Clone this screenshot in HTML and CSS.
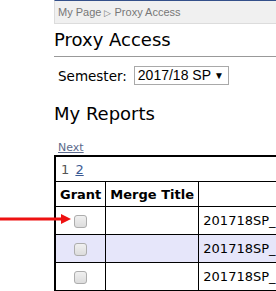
FILE: index.html
```html
<!DOCTYPE html>
<html>
<head>
  <link rel="stylesheet" href="styles.css">
</head>
<body>
  <div class="page">
    <div class="breadcrumb">My Page <span class="sep">&#9655;</span> Proxy Access</div>
    <h1 class="title">Proxy Access</h1>
    <div class="semester">
      <label for="sem">Semester:</label>
      <div class="select" id="sem">2017/18 SP<span class="caret">&#9660;</span></div>
    </div>
    <h2 class="subtitle">My Reports</h2>
    <a class="next" href="#">Next</a>
    <table class="reports">
      <tr class="pager">
        <td colspan="3">1 <a href="#">2</a></td>
      </tr>
      <tr>
        <th class="col-grant">Grant</th>
        <th class="col-merge">Merge Title</th>
        <th></th>
      </tr>
      <tr>
        <td class="col-grant"><span class="check"></span></td>
        <td></td>
        <td>201718SP_</td>
      </tr>
      <tr class="alt">
        <td class="col-grant"><span class="check"></span></td>
        <td></td>
        <td>201718SP_</td>
      </tr>
      <tr>
        <td class="col-grant"><span class="check"></span></td>
        <td></td>
        <td>201718SP_</td>
      </tr>
    </table>
  </div>
  <svg class="arrow" width="72" height="12" viewBox="0 0 72 12">
    <line x1="0" y1="6" x2="62" y2="6" stroke="#ee1111" stroke-width="3"/>
    <polygon points="61,1 71,6 61,11" fill="#ee1111"/>
  </svg>
</body>
</html>
```

FILE: styles.css
```css
body {
  margin: 0;
  background: #fff;
  font-family: "DejaVu Sans", Verdana, sans-serif;
  color: #000;
  position: relative;
  overflow: hidden;
}

.page {
  margin-left: 54px;
  width: 222px;
  overflow: hidden;
}

.breadcrumb {
  border-top: 1px solid #34508a;
  background: #f0f0f0;
  border-bottom: 1px solid #dcdcdc;
  border-left: 1px solid #dcdcdc;
  height: 22px;
  line-height: 22px;
  padding-left: 3px;
  font-family: "Liberation Sans", Arial, sans-serif;
  font-size: 11px;
  color: #777;
}

.breadcrumb .sep {
  font-size: 9px;
}

.title {
  font-size: 18px;
  font-weight: normal;
  margin: 0;
  padding: 5px 0 6px;
  border-bottom: 1px solid #999;
}

.semester {
  display: flex;
  align-items: center;
  gap: 7px;
  padding: 9px 0 0 4px;
  font-size: 13.5px;
}

.select {
  display: flex;
  align-items: center;
  width: 86px;
  border: 1px solid #a9a9a9;
  height: 17px;
  line-height: 17px;
  padding: 0 4px 0 3px;
  font-family: "Liberation Sans", Arial, sans-serif;
  font-size: 14px;
  color: #000;
}

.select .caret {
  font-size: 10px;
  margin-left: auto;
}

.subtitle {
  font-size: 18px;
  font-weight: normal;
  margin: 18px 0 0;
}

.next {
  display: block;
  margin: 17px 0 1px 4px;
  font-size: 11px;
  color: #5c6a8c;
  line-height: 13px;
}

.reports {
  border-collapse: collapse;
  border: 2px solid #000;
  border-right: none;
  width: 320px;
  font-size: 13px;
}

.reports td,
.reports th {
  border: 1px solid #000;
  height: 27px;
  padding: 0 4px;
  text-align: left;
  white-space: nowrap;
}

.reports .pager td {
  height: 24px;
  color: #555;
  padding-left: 5px;
}

.pager a {
  color: #3a5a94;
  margin-left: 2px;
}

.reports th {
  height: 24px;
  font-weight: bold;
}

.reports .col-grant {
  width: 41px;
  text-align: center;
}

.reports .col-merge {
  width: 84px;
}

.reports .alt td {
  background: #e6e6fa;
}

.check {
  display: inline-block;
  width: 11px;
  height: 11px;
  border: 1px solid #adadad;
  border-radius: 3px;
  background: linear-gradient(#f0f0f0, #dcdcdc);
  vertical-align: middle;
}

.arrow {
  position: absolute;
  left: 0;
  top: 213px;
}
```
